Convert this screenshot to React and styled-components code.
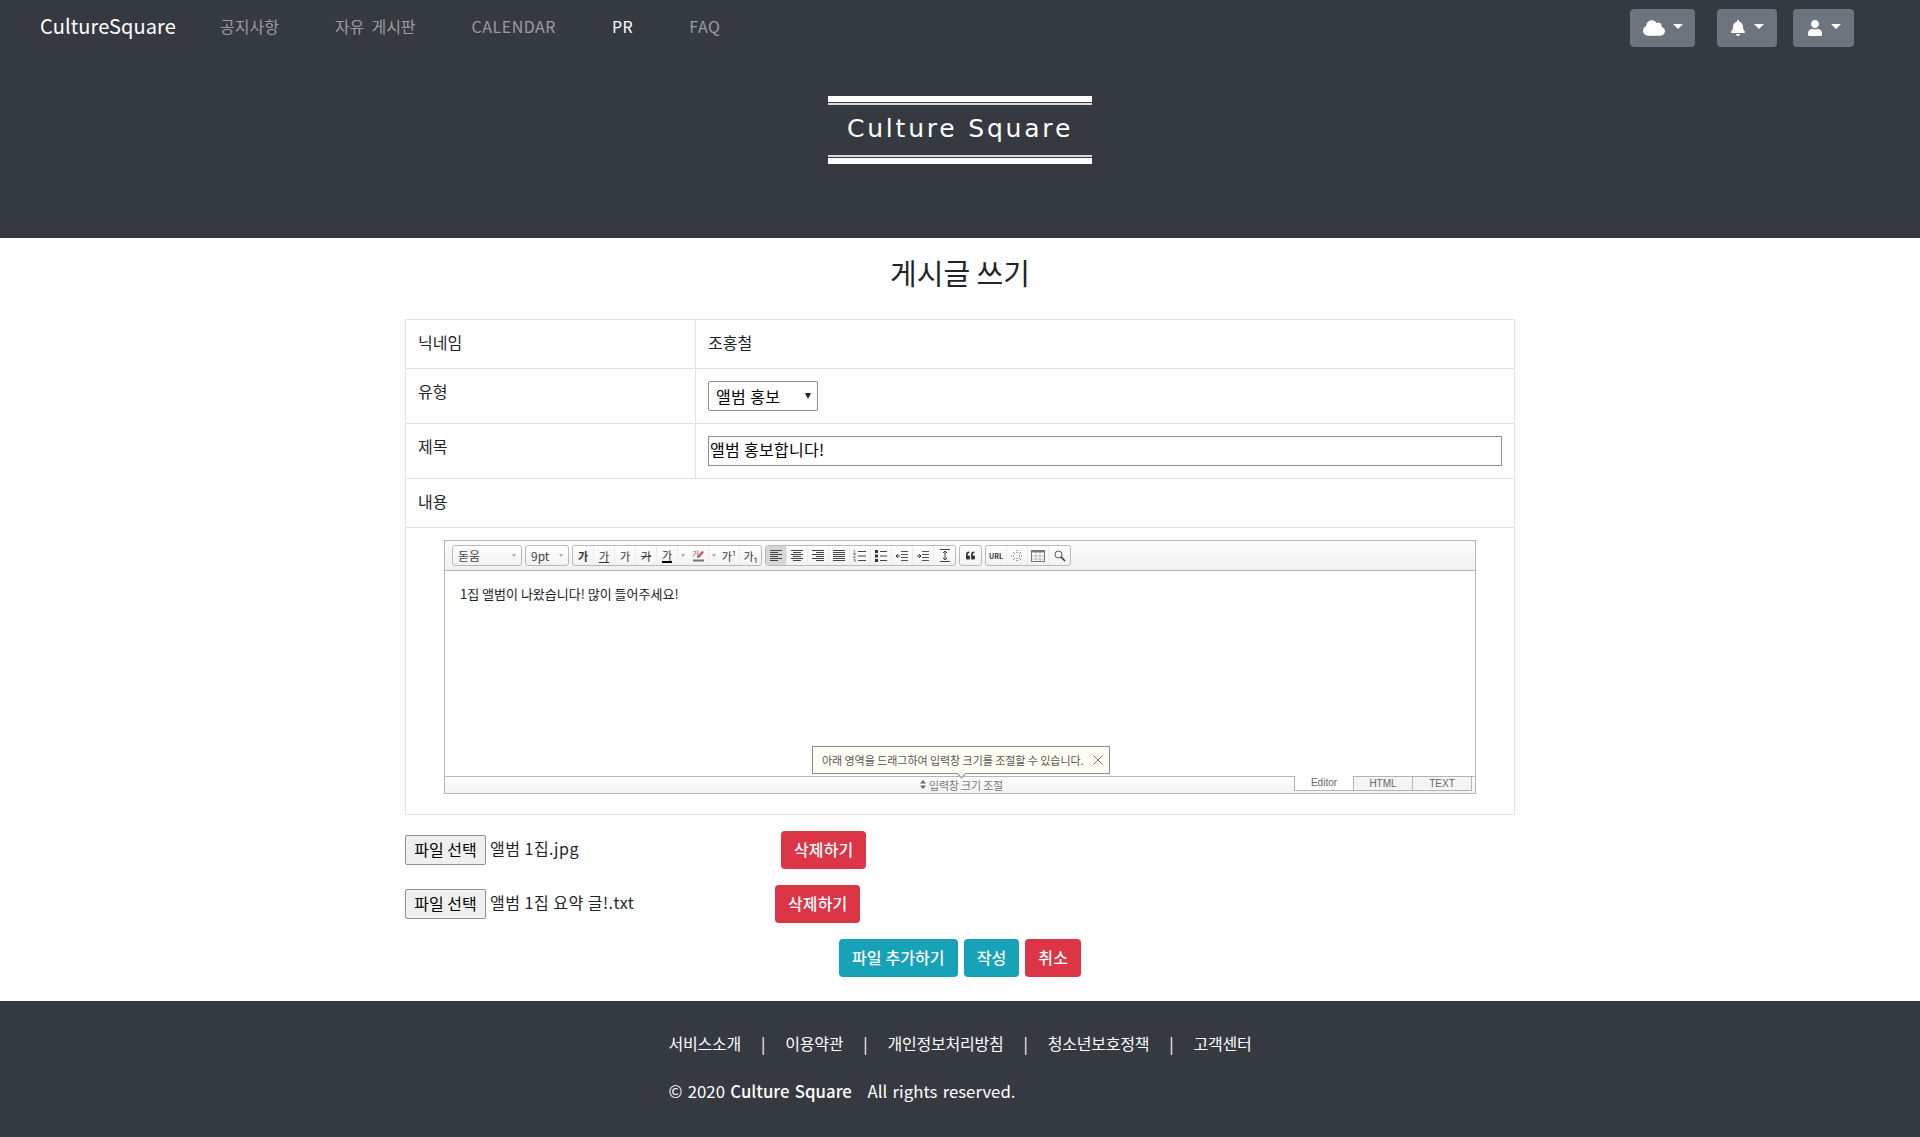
import React from "react";
import styled, { createGlobalStyle } from "styled-components";
import { FaCloud, FaBell, FaUser, FaQuoteLeft } from "react-icons/fa";

const FONT = `"Noto Sans CJK KR", "Open Sans", sans-serif`;

const GlobalStyle = createGlobalStyle`
  html, body {
    margin: 0;
    padding: 0;
    background: #fff;
    font-family: ${FONT};
    font-size: 16px;
    color: #212529;
  }
  * { box-sizing: border-box; }
`;

const Header = styled.header`
  background: #343a40;
  height: 238px;
  display: flex;
  flex-direction: column;
`;

const TopBar = styled.nav`
  height: 56px;
  padding: 0 66px 0 40px;
  display: flex;
  align-items: center;
`;

const Brand = styled.div`
  color: #fff;
  font-size: 20px;
  letter-spacing: 0.1px;
  width: 180px;
  margin-bottom: 5px;
`;

const NavItem = styled.a`
  color: ${({ $active }) => ($active ? "#fff" : "rgba(255,255,255,0.5)")};
  font-size: 16px;
  letter-spacing: ${({ $latin }) => ($latin ? "0.5px" : "0")};
  word-spacing: 3.5px;
  margin-right: ${({ $last }) => ($last ? 0 : 56)}px;
  margin-bottom: 5px;
`;

const NavRight = styled.div`
  margin-left: auto;
  display: flex;
`;

const IconButton = styled.button`
  width: ${({ $w }) => $w}px;
  height: 38px;
  margin-left: ${({ $gap }) => $gap}px;
  border: 0;
  border-radius: 4px;
  background: #6c757d;
  color: #fff;
  display: flex;
  align-items: center;
  justify-content: center;
  gap: 8px;
  padding: 0;
  svg { display: block; }
  &::after {
    content: "";
    border-top: 5px solid #fff;
    border-left: 5px solid transparent;
    border-right: 5px solid transparent;
    margin-top: -3px;
  }
`;

const LogoWrap = styled.div`
  display: flex;
  justify-content: center;
  padding-top: 40px;
`;

const Logo = styled.div`
  width: 264px;
  height: 68px;
  padding-bottom: 4px;
  border-top: 6px solid #fff;
  border-bottom: 6px solid #fff;
  position: relative;
  display: flex;
  align-items: center;
  justify-content: center;
  color: #fff;
  font-family: "DejaVu Sans", sans-serif;
  font-size: 25px;
  letter-spacing: 2.8px;
  &::before, &::after {
    content: "";
    position: absolute;
    left: 0;
    right: 0;
    height: 2px;
    background: #d8d9da;
  }
  &::before { top: 1px; }
  &::after { bottom: 1px; }
`;

const Main = styled.main`
  height: 763px;
  display: flex;
  flex-direction: column;
  align-items: center;
`;

const Title = styled.h2`
  margin: 0;
  height: 81px;
  padding-bottom: 14px;
  display: flex;
  align-items: center;
  font-size: 29px;
  font-weight: 400;
`;

const FormTable = styled.div`
  width: 1110px;
  border: 1px solid #dee2e6;
  display: grid;
  grid-template-columns: 290px 1fr;
`;

const LabelCell = styled.div`
  height: ${({ $h }) => $h}px;
  padding: 12px;
  border-bottom: 1px solid #dee2e6;
  border-right: 1px solid #dee2e6;
  font-size: 16px;
  line-height: 20px;
`;

const ValueCell = styled.div`
  height: ${({ $h }) => $h}px;
  padding: 12px;
  border-bottom: 1px solid #dee2e6;
  font-size: 16px;
  line-height: 20px;
`;

const WideCell = styled.div`
  grid-column: 1 / 3;
  height: ${({ $h }) => $h}px;
  padding: ${({ $editor }) => ($editor ? "12px 38px 0 38px" : "12px")};
  border-bottom: ${({ $editor }) => ($editor ? "0" : "1px solid #dee2e6")};
  line-height: 20px;
`;

const FakeSelect = styled.div`
  width: 110px;
  height: 30px;
  border: 1px solid #8f8f8f;
  border-radius: 2px;
  background: #fff;
  color: #000;
  padding-left: 7px;
  display: flex;
  align-items: center;
  justify-content: space-between;
  font-size: 16px;
  letter-spacing: 0.4px;
  &::after {
    content: "";
    border-top: 6px solid #222;
    border-left: 3px solid transparent;
    border-right: 3px solid transparent;
    margin-right: 6px;
  }
`;

const TextField = styled.input`
  display: block;
  width: 100%;
  height: 30px;
  border: 1px solid #8f8f8f;
  padding: 0 1px 4px;
  color: #000;
  font-family: ${FONT};
  font-size: 16px;
  letter-spacing: 0.3px;
  outline: none;
`;

const Editor = styled.div`
  width: 1032px;
  height: 254px;
  border: 1px solid #b5b5b5;
  display: flex;
  flex-direction: column;
  position: relative;
`;

const Toolbar = styled.div`
  height: 30px;
  background: linear-gradient(#fdfdfd, #f1f1f1);
  border-bottom: 1px solid #b5b5b5;
  padding: 4px 7px;
  display: flex;
  gap: 3px;
`;

const ToolGroup = styled.div`
  height: 21px;
  border: 1px solid #b9b9b9;
  border-radius: 3px;
  background: linear-gradient(#fff, #f2f2f2);
  display: flex;
`;

const FontPick = styled.div`
  width: ${({ $w }) => $w}px;
  padding-left: 5px;
  display: flex;
  align-items: center;
  justify-content: space-between;
  font-size: 12px;
  color: #444;
  &::after {
    content: "";
    border-top: 3px solid #aaa;
    border-left: 2.5px solid transparent;
    border-right: 2.5px solid transparent;
    margin-right: 5px;
  }
`;

const ToolButton = styled.div`
  width: 21px;
  height: 19px;
  display: flex;
  align-items: center;
  justify-content: center;
  font-size: ${({ $small }) => ($small ? "7px" : "11px")};
  font-weight: ${({ $bold }) => ($bold ? 700 : 400)};
  color: #333;
  background: ${({ $on }) => ($on ? "#d6d6d6" : "transparent")};
  border-right: 1px solid #ececec;
  text-decoration: ${({ $line }) => $line || "none"};
  &:last-child { border-right: 0; }
`;

const ColorUnder = styled.span`
  line-height: 12px;
  border-bottom: 2px solid #000;
`;

const SmallArrow = styled.div`
  width: 10px;
  display: flex;
  align-items: center;
  justify-content: center;
  &::after {
    content: "";
    border-top: 3px solid #aaa;
    border-left: 2.5px solid transparent;
    border-right: 2.5px solid transparent;
  }
`;

const EditArea = styled.div`
  flex: 1;
  padding: 14px 15px;
  font-size: 13px;
  line-height: 18px;
  color: #222;
`;

const ResizeBar = styled.div`
  height: 17px;
  border-top: 1px solid #b5b5b5;
  background: linear-gradient(#fff, #f3f3f3);
  display: flex;
`;

const ResizeLabel = styled.div`
  width: 849px;
  padding-left: 184px;
  padding-bottom: 1px;
  display: flex;
  align-items: center;
  justify-content: center;
  gap: 3px;
  font-size: 11px;
  color: #777;
  letter-spacing: -0.2px;
`;

const ModeTab = styled.div`
  width: ${({ $first }) => ($first ? 60 : 59)}px;
  height: 15px;
  margin-top: -1px;
  border: 1px solid #b5b5b5;
  border-top: ${({ $on }) => ($on ? "0" : "1px solid #b5b5b5")};
  border-left: ${({ $first }) => ($first ? "1px solid #b5b5b5" : "0")};
  background: ${({ $on }) => ($on ? "#fff" : "#f4f4f4")};
  display: flex;
  align-items: center;
  justify-content: center;
  font-family: "Liberation Sans", sans-serif;
  font-size: 10px;
  color: #666;
`;

const Tip = styled.div`
  position: absolute;
  left: 367px;
  bottom: 19px;
  width: 298px;
  height: 28px;
  border: 1px solid #8c8c7a;
  background: #fffef3;
  display: flex;
  align-items: center;
  padding-left: 9px;
  font-size: 11px;
  color: #555;
  letter-spacing: -0.05px;
  white-space: nowrap;
  &::after {
    content: "";
    position: absolute;
    left: 145px;
    bottom: -4px;
    width: 6px;
    height: 6px;
    background: #fffef3;
    border-right: 1px solid #8c8c7a;
    border-bottom: 1px solid #8c8c7a;
    transform: rotate(45deg);
  }
`;

const TipClose = styled.svg`
  width: 10px;
  height: 10px;
  position: absolute;
  right: 6px;
  top: 8px;
`;

const FileList = styled.div`
  width: 1110px;
  display: flex;
  flex-direction: column;
`;

const FileRow = styled.div`
  height: 38px;
  margin-top: ${({ $mt }) => $mt}px;
  display: flex;
  align-items: center;
`;

const FileButton = styled.button`
  width: 81px;
  height: 30px;
  margin-top: -1px;
  border: 1px solid #8f8f8f;
  border-radius: 2px;
  background: #efefef;
  color: #000;
  padding: 0 0 2px;
  font-family: ${FONT};
  font-size: 16px;
`;

const FileName = styled.span`
  margin-left: 4px;
  margin-bottom: 5px;
  width: ${({ $w }) => $w}px;
  font-size: 16px;
  letter-spacing: 0.5px;
  white-space: nowrap;
`;

const Btn = styled.button`
  height: 38px;
  padding: 0 13px 3px;
  border: 0;
  border-radius: 4px;
  background: ${({ $kind }) => ($kind === "danger" ? "#dc3545" : "#17a2b8")};
  color: #fff;
  font-family: ${FONT};
  font-size: 16px;
  font-weight: 500;
  letter-spacing: 0.1px;
`;

const Actions = styled.div`
  margin-top: 16px;
  display: flex;
  justify-content: center;
  gap: 6px;
`;

const Footer = styled.footer`
  background: #343a40;
  height: 136px;
  color: #fff;
  padding-top: 30px;
  display: flex;
  flex-direction: column;
  align-items: center;
`;

const FooterInner = styled.div`
  width: 583px;
`;

const FooterLinks = styled.div`
  display: flex;
  justify-content: space-between;
  font-size: 16px;
  line-height: 24px;
  letter-spacing: -0.2px;
`;

const Copy = styled.div`
  margin-top: 24px;
  font-size: 16.8px;
  line-height: 24px;
  word-spacing: 1.5px;
  b { font-weight: 500; }
`;

const AlignIcon = ({ kind }) => {
  const rows = {
    left: [[1, 13], [1, 9], [1, 13], [1, 9], [1, 13], [1, 9]],
    center: [[1, 13], [3, 11], [1, 13], [3, 11], [1, 13], [3, 11]],
    right: [[1, 13], [5, 13], [1, 13], [5, 13], [1, 13], [5, 13]],
    full: [[1, 13], [1, 13], [1, 13], [1, 13], [1, 13], [1, 13]],
  }[kind];
  return (
    <svg width="14" height="12" viewBox="0 0 14 12">
      {rows.map(([a, b], i) => (
        <line key={i} x1={a} x2={b} y1={0.5 + i * 2} y2={0.5 + i * 2} stroke="#444" strokeWidth="1" />
      ))}
    </svg>
  );
};

const ListIcon = ({ ordered }) => (
  <svg width="14" height="12" viewBox="0 0 14 12">
    {[1.5, 6, 10.5].map((y, i) =>
      ordered ? (
        <g key={y}>
          <text x="0" y={y + 2} fontSize="5" fontFamily="Liberation Sans" fill="#333">{i + 1}</text>
          <line x1="5" x2="13" y1={y} y2={y} stroke="#444" />
        </g>
      ) : (
        <g key={y}>
          <rect x="1" y={y - 1.5} width="3" height="3" fill="#333" />
          <line x1="6" x2="13" y1={y} y2={y} stroke="#444" />
        </g>
      )
    )}
  </svg>
);

const IndentIcon = ({ out }) => (
  <svg width="14" height="12" viewBox="0 0 14 12">
    {[0, 3, 6, 9].map((y) => (
      <line key={y} x1="6" x2="13" y1={y + 1.5} y2={y + 1.5} stroke="#555" />
    ))}
    <path d={out ? "M5 6H1M3 4L1 6l2 2" : "M1 6h4M3 4l2 2-2 2"} stroke="#333" fill="none" />
  </svg>
);

const LineHeightIcon = () => (
  <svg width="12" height="13" viewBox="0 0 12 13">
    <path d="M1 .5h10M1 12.5h10M6 2v9M4 4l2-2 2 2M4 9l2 2 2-2" stroke="#444" fill="none" />
  </svg>
);

const SpecialIcon = () => (
  <svg width="12" height="12" viewBox="0 0 12 12">
    <path d="M6 0v4M6 8v4M0 6h4M8 6h4M2 2l2 2M8 8l2 2M10 2L8 4M4 8l-2 2" stroke="#555" fill="none" strokeDasharray="1 1" />
  </svg>
);

const TableIcon = () => (
  <svg width="14" height="12" viewBox="0 0 14 12">
    <rect x="0.5" y="0.5" width="13" height="11" fill="#fff" stroke="#777" />
    <rect x="0.5" y="0.5" width="13" height="2" fill="#777" />
    <path d="M5 3v8M9 3v8M1 6h12M1 9h12" stroke="#bbb" />
  </svg>
);

const SearchIcon = () => (
  <svg width="12" height="12" viewBox="0 0 12 12">
    <circle cx="4.5" cy="4.5" r="3.5" fill="none" stroke="#555" />
    <path d="M7 7l4 4" stroke="#333" strokeWidth="1.6" />
  </svg>
);

const PenIcon = () => (
  <svg width="13" height="13" viewBox="0 0 13 13">
    <text x="0" y="8" fontSize="8" fill="#777">가</text>
    <path d="M5 8l5-6 2 1-5 6z" fill="#c0504d" />
    <rect x="1" y="10.5" width="11" height="2" fill="#777" />
  </svg>
);

const DragIcon = () => (
  <svg width="6" height="9" viewBox="0 0 6 9">
    <path d="M3 0l3 3.5H0zM3 9L0 5.5h6z" fill="#666" />
  </svg>
);

const EditorBox = () => (
  <Editor>
    <Toolbar>
      <ToolGroup><FontPick $w={68}>돋움</FontPick></ToolGroup>
      <ToolGroup><FontPick $w={42}>9pt</FontPick></ToolGroup>
      <ToolGroup>
        <ToolButton $bold>가</ToolButton>
        <ToolButton $line="underline">가</ToolButton>
        <ToolButton>가</ToolButton>
        <ToolButton $line="line-through">가</ToolButton>
        <ToolButton><ColorUnder>가</ColorUnder></ToolButton>
        <SmallArrow />
        <ToolButton><PenIcon /></ToolButton>
        <SmallArrow />
        <ToolButton>가¹</ToolButton>
        <ToolButton>가₁</ToolButton>
      </ToolGroup>
      <ToolGroup>
        <ToolButton $on><AlignIcon kind="left" /></ToolButton>
        <ToolButton><AlignIcon kind="center" /></ToolButton>
        <ToolButton><AlignIcon kind="right" /></ToolButton>
        <ToolButton><AlignIcon kind="full" /></ToolButton>
        <ToolButton><ListIcon ordered /></ToolButton>
        <ToolButton><ListIcon /></ToolButton>
        <ToolButton><IndentIcon out /></ToolButton>
        <ToolButton><IndentIcon /></ToolButton>
        <ToolButton><LineHeightIcon /></ToolButton>
      </ToolGroup>
      <ToolGroup>
        <ToolButton><FaQuoteLeft size={9} /></ToolButton>
      </ToolGroup>
      <ToolGroup>
        <ToolButton $small $bold>URL</ToolButton>
        <ToolButton><SpecialIcon /></ToolButton>
        <ToolButton><TableIcon /></ToolButton>
        <ToolButton><SearchIcon /></ToolButton>
      </ToolGroup>
    </Toolbar>
    <EditArea>1집 앨범이 나왔습니다! 많이 들어주세요!</EditArea>
    <ResizeBar>
      <ResizeLabel><DragIcon /> 입력창 크기 조절</ResizeLabel>
      <ModeTab $on $first>Editor</ModeTab>
      <ModeTab>HTML</ModeTab>
      <ModeTab>TEXT</ModeTab>
    </ResizeBar>
    <Tip>
      아래 영역을 드래그하여 입력창 크기를 조절할 수 있습니다.
      <TipClose viewBox="0 0 10 10">
        <path d="M.5.5l9 9M9.5.5l-9 9" stroke="#777" fill="none" />
      </TipClose>
    </Tip>
  </Editor>
);

export default function App() {
  return (
    <>
      <GlobalStyle />
      <Header>
        <TopBar>
          <Brand>CultureSquare</Brand>
          <NavItem>공지사항</NavItem>
          <NavItem>자유 게시판</NavItem>
          <NavItem $latin>CALENDAR</NavItem>
          <NavItem $latin $active>PR</NavItem>
          <NavItem $latin $last>FAQ</NavItem>
          <NavRight>
            <IconButton $w={65} $gap={0}><FaCloud size={22} /></IconButton>
            <IconButton $w={60} $gap={22}><FaBell size={16} /></IconButton>
            <IconButton $w={61} $gap={16}><FaUser size={16} /></IconButton>
          </NavRight>
        </TopBar>
        <LogoWrap>
          <Logo>Culture Square</Logo>
        </LogoWrap>
      </Header>
      <Main>
        <Title>게시글 쓰기</Title>
        <FormTable>
          <LabelCell $h={49}>닉네임</LabelCell>
          <ValueCell $h={49}>조홍철</ValueCell>
          <LabelCell $h={55}>유형</LabelCell>
          <ValueCell $h={55}><FakeSelect>앨범 홍보</FakeSelect></ValueCell>
          <LabelCell $h={55}>제목</LabelCell>
          <ValueCell $h={55}><TextField readOnly value="앨범 홍보합니다!" /></ValueCell>
          <WideCell $h={49}>내용</WideCell>
          <WideCell $h={286} $editor><EditorBox /></WideCell>
        </FormTable>
        <FileList>
          <FileRow $mt={16}>
            <FileButton>파일 선택</FileButton>
            <FileName $w={291}>앨범 1집.jpg</FileName>
            <Btn $kind="danger">삭제하기</Btn>
          </FileRow>
          <FileRow $mt={16}>
            <FileButton>파일 선택</FileButton>
            <FileName $w={285}>앨범 1집 요약 글!.txt</FileName>
            <Btn $kind="danger">삭제하기</Btn>
          </FileRow>
        </FileList>
        <Actions>
          <Btn>파일 추가하기</Btn>
          <Btn>작성</Btn>
          <Btn $kind="danger">취소</Btn>
        </Actions>
      </Main>
      <Footer>
        <FooterInner>
          <FooterLinks>
            <span>서비스소개</span><span>|</span>
            <span>이용약관</span><span>|</span>
            <span>개인정보처리방침</span><span>|</span>
            <span>청소년보호정책</span><span>|</span>
            <span>고객센터</span>
          </FooterLinks>
          <Copy>© 2020 <b>Culture Square</b> &nbsp; All rights reserved.</Copy>
        </FooterInner>
      </Footer>
    </>
  );
}
